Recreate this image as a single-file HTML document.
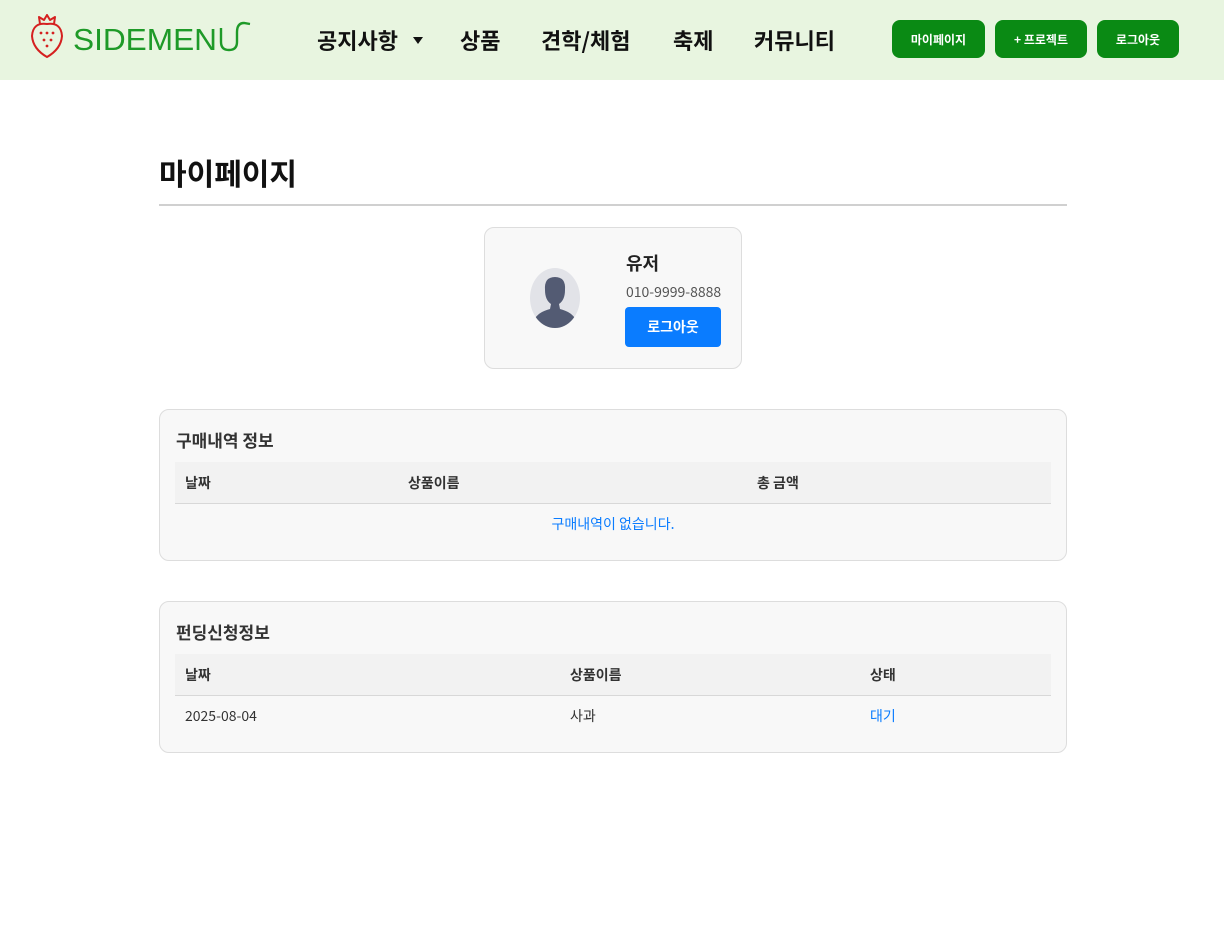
<!DOCTYPE html>
<html><head><meta charset="utf-8"><style>
*{box-sizing:border-box;margin:0;padding:0}
body{width:1224px;height:939px;background:#fff;font-family:"Noto Sans CJK KR","Liberation Sans",sans-serif;color:#222;position:relative;overflow:hidden}
.hdr{position:absolute;left:0;top:0;width:1224px;height:80px;background:#e8f5e0}
.logo{position:absolute;left:30px;top:14px}
.nav{position:absolute;top:22px;font-size:22px;font-weight:700;color:#111;line-height:36px}
.btn{position:absolute;top:20px;height:38px;background:#0a8a14;color:#fff;font-size:12px;font-weight:700;border-radius:8px;display:flex;align-items:center;justify-content:center}
h1{position:absolute;left:159px;top:150px;font-size:30px;font-weight:700;color:#111;line-height:44px}
.hr{position:absolute;left:159px;top:204px;width:908px;height:2px;background:#d0d0d0}
.pc{position:absolute;left:484px;top:227px;width:258px;height:142px;background:#f8f8f8;border:1px solid #ddd;border-radius:10px}
.card{position:absolute;left:159px;width:908px;background:#f8f8f8;border:1px solid #ddd;border-radius:10px}
.card h2{position:absolute;left:16px;top:17px;font-size:17px;font-weight:700;color:#333;line-height:26px}
.th{position:absolute;left:15px;top:52px;width:876px;height:42px;background:#f2f2f2;border-bottom:1px solid #d8d8d8}
.c{position:absolute;font-size:14px;line-height:20px}
.th .c{top:11px;font-weight:700;color:#333}
</style></head><body>
<div class="hdr">
<svg class="logo" width="225" height="46" viewBox="0 0 225 46">
<path d="M17 10 Q3 8 2 22 Q3 35 17 43 Q31 35 32 22 Q31 8 17 10Z" fill="none" stroke="#d52020" stroke-width="2"/>
<path d="M10 10 L9 3 L14 6 L17 1 L20 6 L25 3 L24 10" fill="none" stroke="#d52020" stroke-width="2" stroke-linejoin="round"/>
<g fill="#d52020"><circle cx="11" cy="19" r="1.4"/><circle cx="17" cy="19" r="1.4"/><circle cx="23" cy="19" r="1.4"/><circle cx="14" cy="26" r="1.4"/><circle cx="21" cy="26" r="1.4"/><circle cx="17" cy="32" r="1.4"/></g>
<text x="43" y="36" font-family="Liberation Sans" font-size="31" fill="#1e9a28" textLength="144" lengthAdjust="spacingAndGlyphs">SIDEMEN</text>
<path d="M191 14 L191 28 Q191 36 199 36 Q207 36 207 28 L207 18 Q207 9 214 9 L220 10" fill="none" stroke="#1e9a28" stroke-width="2.4"/>
</svg>
<div class="nav" style="left:317px">공지사항</div>
<svg style="position:absolute;left:413px;top:37px" width="10" height="7" viewBox="0 0 10 7"><path d="M0 0 L10 0 L5 7Z" fill="#111"/></svg>
<div class="nav" style="left:460px">상품</div>
<div class="nav" style="left:541px">견학/체험</div>
<div class="nav" style="left:673px">축제</div>
<div class="nav" style="left:754px">커뮤니티</div>
<div class="btn" style="left:892px;width:93px">마이페이지</div>
<div class="btn" style="left:995px;width:92px">+ 프로젝트</div>
<div class="btn" style="left:1097px;width:82px">로그아웃</div>
</div>
<h1>마이페이지</h1>
<div class="hr"></div>
<div class="pc">
<svg style="position:absolute;left:45px;top:40px" width="50" height="60" viewBox="0 0 50 60">
<ellipse cx="25" cy="30" rx="25" ry="30" fill="#e2e3e8"/>
<clipPath id="cl"><ellipse cx="25" cy="30" rx="25" ry="30"/></clipPath>
<g clip-path="url(#cl)" fill="#535b73"><path d="M25 9 Q36 9 35 22 Q35 32 29 36 L30 41 Q42 44 46 52 L46 60 L4 60 L4 52 Q8 44 20 41 L21 36 Q15 32 15 22 Q14 9 25 9Z"/></g>
</svg>
<div style="position:absolute;left:141px;top:21px;font-size:18px;font-weight:700;color:#222;line-height:28px">유저</div>
<div style="position:absolute;left:141px;top:53px;font-size:14px;color:#555;line-height:22px">010-9999-8888</div>
<div style="position:absolute;left:140px;top:79px;width:96px;height:40px;background:#0a7cff;border-radius:4px;color:#fff;font-size:14px;font-weight:700;display:flex;align-items:center;justify-content:center">로그아웃</div>
</div>
<div class="card" style="top:409px;height:152px">
<h2>구매내역 정보</h2>
<div class="th"><div class="c" style="left:10px">날짜</div><div class="c" style="left:233px">상품이름</div><div class="c" style="left:582px">총 금액</div></div>
<div class="c" style="left:0;width:906px;text-align:center;top:104px;color:#0a7cff">구매내역이 없습니다.</div>
</div>
<div class="card" style="top:601px;height:152px">
<h2>펀딩신청정보</h2>
<div class="th"><div class="c" style="left:10px">날짜</div><div class="c" style="left:395px">상품이름</div><div class="c" style="left:695px">상태</div></div>
<div class="c" style="left:25px;top:104px;color:#333">2025-08-04</div>
<div class="c" style="left:410px;top:104px;color:#333">사과</div>
<div class="c" style="left:710px;top:104px;color:#0a7cff">대기</div>
</div>
</body></html>
